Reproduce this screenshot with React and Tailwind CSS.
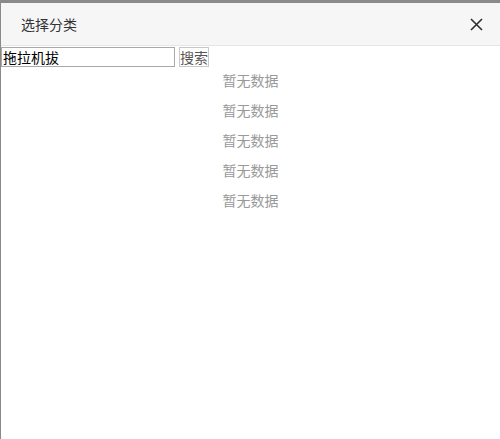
import React from "react";

export default function App() {
  const items = ["暂无数据", "暂无数据", "暂无数据", "暂无数据", "暂无数据"];
  return (
    <div
      className="w-[500px] h-[439px] bg-white border-t-[3px] border-l border-[#8a8a8a] flex flex-col overflow-hidden"
      style={{ fontFamily: '"Microsoft YaHei", "Noto Sans CJK SC", "Noto Sans", sans-serif' }}
    >
      <div className="h-[43px] shrink-0 bg-[#f6f6f6] border-b border-[#e6e6e6] flex items-center justify-between pl-[20px] pr-[17px]">
        <span className="text-[14px] text-[#333]">选择分类</span>
        <svg width="13" height="13" viewBox="0 0 13 13" className="text-[#2d2d2d]">
          <path d="M1 1 L12 12 M12 1 L1 12" stroke="currentColor" strokeWidth="1.6" fill="none" />
        </svg>
      </div>
      <div className="flex items-center gap-[4px] pt-[1px]">
        <input
          defaultValue="拖拉机拔"
          className="w-[174px] h-[20px] border border-[#a9a9a9] px-[1px] text-[14px] text-black leading-[18px] outline-none bg-white"
        />
        <button className="w-[30px] h-[20px] border border-[#c8c8c8] bg-white text-[14px] text-[#555] leading-[18px] p-0 whitespace-nowrap flex items-center justify-center">
          搜索
        </button>
      </div>
      <div className="flex flex-col -mt-[2px]">
        {items.map((t, i) => (
          <div key={i} className="h-[30px] flex items-center justify-center text-[14px] text-[#999]">
            {t}
          </div>
        ))}
      </div>
    </div>
  );
}
